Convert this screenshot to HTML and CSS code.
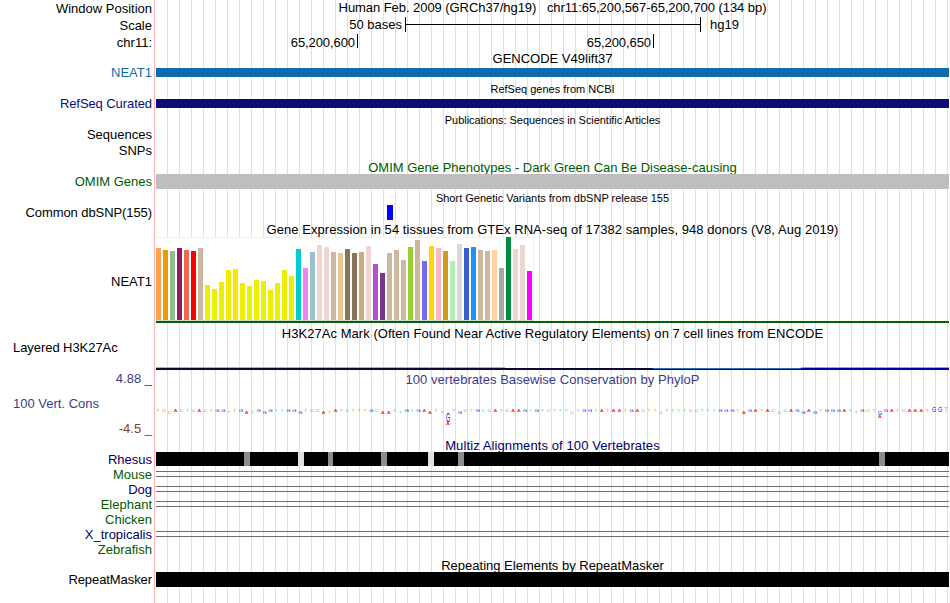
FILE: index.html
```html
<!DOCTYPE html>
<html lang="en">
  <head>
    <meta charset="UTF-8" />
    <meta name="viewport" content="width=device-width, initial-scale=1.0" />
    <title>chr11:65,200,567-65,200,700</title>
    <link rel="stylesheet" href="styles.css">
  </head>
  <body>
    <div class="browser">

      <div class="row h17">
        <div class="label">Window Position</div>
        <div class="track title top-title">Human Feb. 2009 (GRCh37/hg19) &nbsp; chr11:65,200,567-65,200,700 (134 bp)</div>
      </div>
      <div class="row h17">
        <div class="label">Scale</div>
        <div class="track scale">
          <span class="scale-text">50 bases</span>
          <span class="scale-bar"></span>
          <span class="scale-name">hg19</span>
        </div>
      </div>
      <div class="row h17">
        <div class="label">chr11:</div>
        <div class="track ruler">
          <span class="tick first">65,200,600</span>
          <span class="tick second">65,200,650</span>
        </div>
      </div>

      <div class="title h15">GENCODE V49lift37</div>
      <div class="row h15 gencode">
        <div class="label up">NEAT1</div>
        <div class="track"><div class="gene"></div></div>
      </div>

      <div class="title h16 small">RefSeq genes from NCBI</div>
      <div class="row h15 refseq">
        <div class="label up tight">RefSeq Curated</div>
        <div class="track"><div class="gene"></div></div>
      </div>

      <div class="title h16 small pub-title">Publications: Sequences in Scientific Articles</div>
      <div class="row h15"><div class="label up">Sequences</div></div>
      <div class="row h16"><div class="label">SNPs</div></div>

      <div class="title h15 green omim-title">OMIM Gene Phenotypes - Dark Green Can Be Disease-causing</div>
      <div class="row h15">
        <div class="label green">OMIM Genes</div>
        <div class="track omim"></div>
      </div>

      <div class="title h16 small snp-title">Short Genetic Variants from dbSNP release 155</div>
      <div class="row h15">
        <div class="label tight">Common dbSNP(155)</div>
        <div class="track"><div class="snp"></div></div>
      </div>

      <div class="title h17 gtex-title">Gene Expression in 54 tissues from GTEx RNA-seq of 17382 samples, 948 donors (V8, Aug 2019)</div>
      <div class="row gtex">
        <div class="label">NEAT1</div>
        <div class="track">
          <div class="js-bars bars"></div>
          <div class="gtex-gene"></div>
        </div>
      </div>

      <div class="title h17 mark-title">H3K27Ac Mark (Often Found Near Active Regulatory Elements) on 7 cell lines from ENCODE</div>
      <div class="row mark">
        <div class="label left">Layered H3K27Ac</div>
        <div class="track mark-lines">
          <div class="mark-a"></div>
          <div class="mark-b"></div>
          <div class="mark-c"></div>
          <div class="mark-d"></div>
        </div>
      </div>

      <div class="row cons">
        <div class="cons-labels">
          <div class="label purple">4.88 _</div>
          <div class="label left purple">100 Vert. Cons</div>
          <div class="label maroon">-4.5 _</div>
        </div>
        <div class="track">
          <div class="cons-title purple">100 vertebrates Basewise Conservation by PhyloP</div>
          <svg class="js-logo logo" width="793" height="30"></svg>
        </div>
      </div>

      <div class="title h14 navy multiz-title">Multiz Alignments of 100 Vertebrates</div>
      <div class="row h15">
        <div class="label navy">Rhesus</div>
        <div class="track"><svg class="js-rhesus rhesus" width="793" height="14"></svg></div>
      </div>
      <div class="row h15"><div class="label green">Mouse</div><div class="track"><div class="gap"></div></div></div>
      <div class="row h15"><div class="label navy">Dog</div><div class="track"><div class="gap"></div></div></div>
      <div class="row h15"><div class="label green">Elephant</div><div class="track"><div class="gap"></div></div></div>
      <div class="row h15"><div class="label green">Chicken</div></div>
      <div class="row h15"><div class="label navy">X_tropicalis</div><div class="track"><div class="gap"></div></div></div>
      <div class="row h15"><div class="label green">Zebrafish</div></div>

      <div class="title h15 repeat-title">Repeating Elements by RepeatMasker</div>
      <div class="row h15">
        <div class="label tight">RepeatMasker</div>
        <div class="track repeat"></div>
      </div>

    </div>
    <script src="script.js"></script>
  </body>
</html>
```
FILE: styles.css
```css
body{
  margin: 0;
  background-color: white;
  color: black;
  font-family: "Liberation Sans", Arial, sans-serif;
  font-size: 13px;
}
/* pink divider, then a guideline every 12px */
.browser{
  height: 603px;
  overflow: hidden;
  background-image:
    linear-gradient(#ffb4b4, #ffb4b4),
    repeating-linear-gradient(to right, #dcdcff 0, #dcdcff 1px, transparent 1px, transparent 12px);
  background-size: 1px 100%, 783px 100%;
  background-position: 154px 0, 167px 0;
  background-repeat: no-repeat;
}
.row{
  display: flex;
  white-space: nowrap;
}
.h14{ height: 14px; line-height: 14px; }
.h15{ height: 15px; line-height: 15px; }
.h16{ height: 16px; line-height: 16px; }
.h17{ height: 17px; line-height: 17px; }
.label{
  width: 152px;
  margin-right: 4px;
  flex: none;
  text-align: right;
}
.label.left{
  text-align: left;
  box-sizing: border-box;
  padding-left: 13px;
}
.up{
  line-height: 13px;
}
.tight{
  letter-spacing: -0.08px;
}
.track{
  width: 793px;
  flex: none;
}
.title{
  box-sizing: border-box;
  text-align: center;
  white-space: nowrap;
}
.title:not(.track){
  padding-left: 156px;
  width: 949px;
}
.top-title{
  line-height: 16px;
  letter-spacing: -0.06px;
}
.small{
  font-size: 11px;
  line-height: 17px;
}
.pub-title{
  line-height: 16px;
  letter-spacing: -0.05px;
}
.snp-title{
  line-height: 18px;
}
.green{ color: #005a00; }
.navy{ color: #000064; }
.purple{ color: #3c3c8c; }
.maroon{ color: #823c3c; }

.scale{
  display: flex;
}
.scale-text{
  width: 246px;
  margin-right: 3px;
  text-align: right;
  line-height: 16px;
}
.scale-bar{
  width: 294px;
  height: 15px;
  border-left: 1px solid black;
  border-right: 1px solid black;
  background: linear-gradient(black, black) 0 7px / 100% 1px no-repeat;
}
.scale-name{
  margin-left: 9px;
  line-height: 16px;
}
.ruler{
  display: flex;
}
.tick{
  height: 14px;
  line-height: 18px;
  text-align: right;
  border-right: 1px solid black;
  box-sizing: border-box;
  padding-right: 2px;
  letter-spacing: -0.08px;
}
.first{ width: 202px; }
.second{ width: 296px; }

.gene{
  height: 9px;
  margin-top: 2px;
}
.gencode{ color: #0c6cab; }
.gencode .gene{ background-color: #0c6cab; }
.refseq{ color: #0c0c78; }
.refseq .gene{ background-color: #0c0c78; }
.omim-title{
  line-height: 18px;
}
.omim{
  background-color: #bebebe;
}
.snp{
  width: 6px;
  height: 15px;
  margin-left: 231px;
  background-color: #0000ff;
}

.gtex-title{
  line-height: 19px;
  letter-spacing: 0.05px;
}
.gtex{
  height: 88px;
  line-height: 90px;
}
.bars{
  display: flex;
  align-items: flex-end;
  gap: 2px;
  box-sizing: border-box;
  width: 378px;
  height: 84px;
  background-color: white;
  border-bottom: 1px solid #d2d2d2;
  box-shadow: inset 0 1px #f0f0f0, inset -1px 0 #f0f0f0;
}
.bar{
  width: 5px;
}
.gtex-gene{
  height: 2px;
  background-color: #006400;
}

.mark-title{
  letter-spacing: 0.045px;
}
.mark{
  height: 28px;
}
.mark .label{
  line-height: 12px;
  letter-spacing: -0.06px;
}
.mark-lines{
  display: grid;
  grid-template-columns: 349px 148px 148px 148px;
  align-items: end;
}
.mark-lines div{
  height: 3px;
  box-sizing: border-box;
}
.mark-a{ background: linear-gradient(#64c8ff 1px, #0a0a32 1px); }
.mark-b{ background: linear-gradient(transparent 1px, #0a0a32 1px); }
.mark-c{ background: linear-gradient(transparent 1px, #1e6ebe 1px, #1e6ebe 2px, #0a0a32 2px); }
.mark-d{ background: linear-gradient(#64b4ff 1px, #0000a0 1px); }

.cons{
  height: 68px;
}
.cons-labels{
  width: 156px;
  flex: none;
  display: flex;
  flex-direction: column;
  justify-content: space-between;
  line-height: 18px;
}
.cons-title{
  height: 20px;
  line-height: 20px;
  text-align: center;
  letter-spacing: 0.04px;
}
.logo{
  display: block;
  margin-top: 15px;
  font-size: 13px;
}
.multiz-title{
  line-height: 16px;
  letter-spacing: 0.1px;
}
.rhesus{
  display: block;
  background-color: black;
}
.gap{
  height: 4px;
  margin-top: 4px;
  border-top: 1px solid #6e6e6e;
  border-bottom: 1px solid #6e6e6e;
}
.repeat-title{
  line-height: 17px;
}
.repeat{
  background-color: black;
}
```
FILE: script.js
```js
// GTEx bars: [height, colour]
const tissues = [
  [72, '#ffa54f'], [70, '#ee9a00'], [69, '#8fbc8f'], [72, '#8b1c62'], [70, '#ee6a50'],
  [69, '#ff0000'], [72, '#cdb79e'], [35, '#eeee00'], [31, '#eeee00'], [38, '#eeee00'],
  [50, '#eeee00'], [51, '#eeee00'], [37, '#eeee00'], [34, '#eeee00'], [40, '#eeee00'],
  [39, '#eeee00'], [30, '#eeee00'], [37, '#eeee00'], [50, '#eeee00'], [44, '#eeee00'],
  [71, '#00cdcd'], [52, '#ee82ee'], [68, '#9ac0cd'], [75, '#eed5d2'], [73, '#eed5d2'],
  [68, '#cdb79e'], [67, '#eec591'], [71, '#8b7355'], [67, '#8b7355'], [68, '#cdaa7d'],
  [74, '#eed5d2'], [56, '#b452cd'], [47, '#7a378b'], [67, '#cdb79e'], [70, '#cdb79e'],
  [60, '#cdb79e'], [73, '#9acd32'], [80, '#cdb79e'], [59, '#7a67ee'], [74, '#ffd700'],
  [72, '#ffb6c1'], [69, '#cd9b1d'], [59, '#b4eeb4'], [76, '#d9d9d9'], [72, '#3a5fcd'],
  [73, '#1e90ff'], [70, '#cdb79e'], [69, '#cdb79e'], [70, '#ffd39b'], [52, '#a6a6a6'],
  [83, '#008b45'], [71, '#eed5d2'], [75, '#eed5d2'], [49, '#ff00ff']
];

let barsHtml = '';
tissues.forEach(([height, color]) => {
  barsHtml += `<div class="bar" style="height:${height}px;background-color:${color}"></div>`;
});
document.querySelector('.js-bars').innerHTML = barsHtml;

// conservation logo, lower case = below zero
const bases =
  'TCcACTCACTGGtTGatGgGTTGGgTCC' +
  'atATCTTTGCaaTtGTGAaTt-' +
  'TgCTGCCATCAAGTGTCTTTcTGGTATAATGA' +
  'CTTcTTTTCCTTTGGGTaGATACcCAGgAgTGGGATtGCT-GATCAAAT---';
const baseColors = { A: '#ff0000', C: '#a89600', G: '#0000ff', T: '#00ff00' };

function drawBase(letter, x, bottom, height) {
  const width = letter === 'T' ? 0.4 : 0.42;
  return `<text transform="translate(${x.toFixed(2)} ${bottom}) scale(${width} ${height / 9})" fill="${baseColors[letter]}">${letter}</text>`;
}

// svg starts at y=405
let logo = '';
for (let i = 0; i < bases.length; i++) {
  const letter = bases[i];
  if (letter === '-') continue;
  const up = letter.toUpperCase();
  logo += drawBase(up, i * 5.918 + 0.1, letter === up ? 7 : 9, 2);
}
logo += drawBase('G', 290, 17, 8.5);
logo += drawBase('A', 290, 19.6, 2);
logo += drawBase('G', 722, 10.4, 3.6);
logo += drawBase('A', 722, 13.4, 2.6);
logo += drawBase('G', 776, 7, 4.4);
logo += drawBase('G', 782, 7, 4.4);
logo += drawBase('T', 788, 7, 5);
document.querySelector('.js-logo').innerHTML = logo;

// mismatched bases on Rhesus: [x, width, colour]
const mismatches = [
  [88, 6, '#8c8c8c'], [142, 6, '#e1e1e1'], [172, 5, '#8c8c8c'], [225, 6, '#8c8c8c'],
  [272, 6, '#e1e1e1'], [302, 6, '#8c8c8c'], [723, 6, '#8c8c8c']
];
document.querySelector('.js-rhesus').innerHTML = mismatches
  .map(([x, w, color]) => `<rect x="${x}" width="${w}" height="14" fill="${color}"/>`)
  .join('');
```
